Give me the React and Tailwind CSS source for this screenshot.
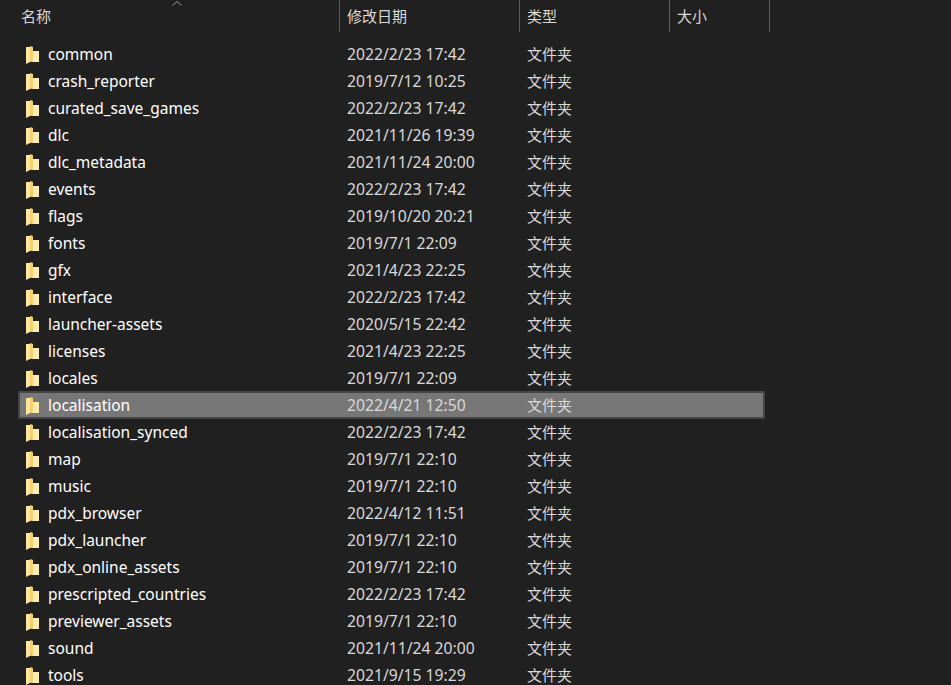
const rows = [
  ['common', '2022/2/23 17:42'],
  ['crash_reporter', '2019/7/12 10:25'],
  ['curated_save_games', '2022/2/23 17:42'],
  ['dlc', '2021/11/26 19:39'],
  ['dlc_metadata', '2021/11/24 20:00'],
  ['events', '2022/2/23 17:42'],
  ['flags', '2019/10/20 20:21'],
  ['fonts', '2019/7/1 22:09'],
  ['gfx', '2021/4/23 22:25'],
  ['interface', '2022/2/23 17:42'],
  ['launcher-assets', '2020/5/15 22:42'],
  ['licenses', '2021/4/23 22:25'],
  ['locales', '2019/7/1 22:09'],
  ['localisation', '2022/4/21 12:50'],
  ['localisation_synced', '2022/2/23 17:42'],
  ['map', '2019/7/1 22:10'],
  ['music', '2019/7/1 22:10'],
  ['pdx_browser', '2022/4/12 11:51'],
  ['pdx_launcher', '2019/7/1 22:10'],
  ['pdx_online_assets', '2019/7/1 22:10'],
  ['prescripted_countries', '2022/2/23 17:42'],
  ['previewer_assets', '2019/7/1 22:10'],
  ['sound', '2021/11/24 20:00'],
  ['tools', '2021/9/15 19:29'],
];

function FolderIcon() {
  return (
    <svg width="13" height="18" viewBox="0 0 13 18" className="shrink-0">
      <path d="M0 1h4v15l-4 2z" fill="#fce6a0" />
      <path d="M4 0l3 1v14l-3 1z" fill="#f6cf6e" />
      <path d="M7 5h6v11H4l3-1z" fill="#feecb2" />
    </svg>
  );
}

function HeaderCell({ label, className }) {
  return (
    <div className={`flex h-8 items-center border-r border-[#5a5a5a] pl-[7px] text-[#d9d9d9] ${className}`}>
      {label}
    </div>
  );
}

export default function App() {
  return (
    <div className="h-[685px] w-[951px] overflow-hidden bg-[#202020] text-[15px] font-['Noto_Sans','Noto_Sans_CJK_SC',sans-serif] text-[#d9d9d9]">
      {/* Column headers */}
      <div className="relative flex">
        <div className="flex h-8 w-[340px] items-center border-r border-[#5a5a5a] pl-[21px]">名称</div>
        <svg width="10" height="5" viewBox="0 0 10 5" className="absolute left-[172px] top-[1px]">
          <path d="M0.5 4.5L5 0.5l4.5 4" fill="none" stroke="#9a9a9a" />
        </svg>
        <HeaderCell label="修改日期" className="w-[180px]" />
        <HeaderCell label="类型" className="w-[150px]" />
        <HeaderCell label="大小" className="w-[100px]" />
      </div>

      {/* Folder rows */}
      <div className="mt-[9px] ml-[18px] w-[747px]">
        {rows.map(([name, date]) => {
          const selected = name === 'localisation';
          return (
            <div key={name} className="relative flex h-[27px] items-center">
              {selected && <div className="absolute inset-x-0 -top-px bottom-0 border-2 border-[#454545] bg-[#777777]" />}
              <div className="relative flex w-[321px] items-center">
                <div className="ml-[8px] flex w-[22px] shrink-0"><FolderIcon /></div>
                <span className="text-[15.5px] text-white">{name}</span>
              </div>
              <div className="relative w-[180px] pl-[8px] text-[15.7px]">{date}</div>
              <div className="relative pl-[8px]">文件夹</div>
            </div>
          );
        })}
      </div>
    </div>
  );
}
